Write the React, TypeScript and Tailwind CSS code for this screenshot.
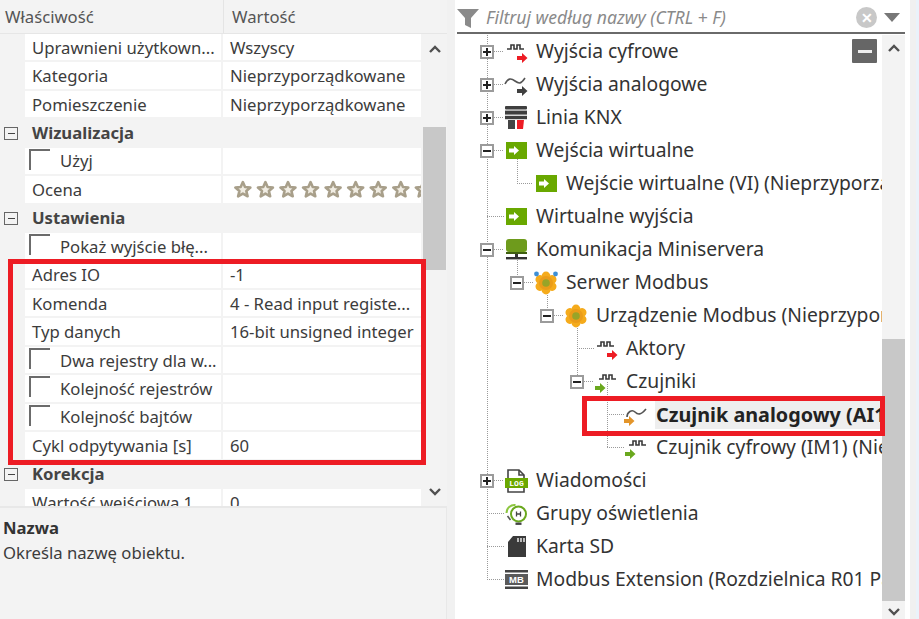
import React from "react";

const F = "font-['Noto_Sans','Open_Sans',sans-serif]";

function Check() {
  return <span className="block w-[21px] h-[21px] border-t-2 border-l-2 border-[#6b6b6b] ml-[4px] mt-[-3px] shrink-0" />;
}

function Stars() {
  return (
    <svg width="193" height="22" viewBox="0 0 193 22" className="block">
      {[0, 1, 2, 3, 4, 5, 6, 7, 8].map((i) => (
        <path
          key={i}
          transform={`translate(${4 + i * 22.8} 1)`}
          d="M9 3l2.2 5 5.4.5-4.1 3.6 1.3 5.3L9 14.6l-4.8 2.8 1.3-5.3L1.4 8.5 6.8 8z"
          fill="#f1ede3"
          stroke="#a89f8a"
          strokeWidth="2.6"
          strokeLinejoin="round"
        />
      ))}
    </svg>
  );
}

type PRow = { n?: string; v?: React.ReactNode; c?: boolean; s?: boolean };
const props: PRow[] = [
  { n: "Uprawnieni użytkown...", v: "Wszyscy" },
  { n: "Kategoria", v: "Nieprzyporządkowane" },
  { n: "Pomieszczenie", v: "Nieprzyporządkowane" },
  { n: "Wizualizacja", s: true },
  { n: "Użyj", c: true },
  { n: "Ocena", v: <Stars /> },
  { n: "Ustawienia", s: true },
  { n: "Pokaż wyjście błę...", c: true },
  { n: "Adres IO", v: "-1" },
  { n: "Komenda", v: "4 - Read input registe..." },
  { n: "Typ danych", v: "16-bit unsigned integer" },
  { n: "Dwa rejestry dla w...", c: true },
  { n: "Kolejność rejestrów", c: true },
  { n: "Kolejność bajtów", c: true },
  { n: "Cykl odpytywania [s]", v: "60" },
  { n: "Korekcja", s: true },
  { n: "Wartość wejściowa 1", v: "0" },
];

function PropertyRow({ r }: { r: PRow }) {
  if (r.s) {
    return (
      <div className="h-[28.45px] shrink-0 flex items-center">
        <span className="w-[14px] h-[13px] ml-[4px] border border-[#666] flex items-center justify-center shrink-0">
          <span className="block w-[7px] h-px bg-[#444]" />
        </span>
        <span className="ml-[14px] mt-[-2px] font-bold text-[#444]">{r.n}</span>
      </div>
    );
  }
  return (
    <div className="h-[28.45px] shrink-0 flex pl-[25px] gap-[2px] pb-[2px]">
      <div className="w-[196px] bg-white flex items-center whitespace-nowrap overflow-hidden">
        {r.c ? (
          <>
            <Check />
            <span className="ml-[10px]">{r.n}</span>
          </>
        ) : (
          <span className="ml-[7px]">{r.n}</span>
        )}
      </div>
      <div className="w-[198px] bg-white flex items-center whitespace-nowrap overflow-hidden pl-[7px]">{r.v}</div>
    </div>
  );
}

function ScrollTrack({ thumbTop, thumbH }: { thumbTop: string; thumbH: string }) {
  return (
    <div className="relative w-[23px] shrink-0 bg-[#f3f3f3]">
      <div className={`absolute left-0 right-0 bg-[#c8c8c8] ${thumbTop} ${thumbH}`} />
    </div>
  );
}

function Chevron({ up, className }: { up?: boolean; className: string }) {
  return (
    <svg width="12" height="8" viewBox="0 0 12 8" className={`absolute ${className}`}>
      <path d={up ? "M1 7l5-5 5 5" : "M1 1l5 5 5-5"} fill="none" stroke="#505050" strokeWidth="2.4" />
    </svg>
  );
}

const Wave = ({ x = 0 }: { x?: number }) => (
  <path transform={`translate(${x} 0)`} d="M1 9h4V5h3v4h3V5h3v4h4" fill="none" stroke="#3a3a3a" strokeWidth="1.6" />
);
const Arrow = ({ x, y, c }: { x: number; y: number; c: string }) => (
  <path transform={`translate(${x} ${y})`} d="M0 3h5V0l5.5 5L5 10V7H0z" fill={c} />
);
const Svg = ({ children }: { children: React.ReactNode }) => (
  <svg width="24" height="24" viewBox="0 0 24 24" className="block">
    {children}
  </svg>
);

const Gear = ({ blue }: { blue?: boolean }) => (
  <Svg>
    {[0, 60, 120, 180, 240, 300].map((a) => (
      <circle key={a} cx="12" cy="5" r="4.4" fill="#f5ab1c" transform={`rotate(${a} 12 12)`} />
    ))}
    <circle cx="12" cy="12" r="7" fill="#ea9c1a" />
    <circle cx="12" cy="12" r="3.8" fill="#98a428" />
    {blue && (
      <>
        <circle cx="2.5" cy="3" r="2.4" fill="#3d8fd6" />
        <circle cx="21.5" cy="3" r="2.4" fill="#3d8fd6" />
      </>
    )}
  </Svg>
);

const GreenBox = () => (
  <Svg>
    <rect x="2" y="3" width="21" height="17" fill="#69a800" />
    <path d="M5 9.5h5V7l5 4.5-5 4.5v-2.5H5z" fill="#fff" />
  </Svg>
);

const icons: Record<string, React.ReactNode> = {
  digRed: (
    <Svg>
      <Wave x={2} />
      <Arrow x={13} y={13} c="#ed1c24" />
    </Svg>
  ),
  anaDark: (
    <Svg>
      <path d="M1 11c3-6 6-6 10-3s6 3 10-3" fill="none" stroke="#555" strokeWidth="1.6" />
      <Arrow x={13} y={13} c="#404040" />
    </Svg>
  ),
  knx: (
    <Svg>
      <rect x="1" y="0" width="22" height="3.4" rx="1" fill="#3f3f3f" />
      <rect x="1" y="4.6" width="22" height="4" fill="#3f3f3f" />
      <rect x="1" y="9.8" width="22" height="3.4" fill="#3f3f3f" />
      <rect x="4" y="14" width="7" height="9" fill="#444" />
      <path d="M13 14h7l-1 9h-6z" fill="#ed1c24" />
    </Svg>
  ),
  green: <GreenBox />,
  net: (
    <Svg>
      <rect x="2" y="1" width="21" height="13" rx="3" fill="#6e9b1c" />
      <rect x="2" y="14" width="21" height="2" fill="#3f5f10" />
      <rect x="11" y="16" width="3" height="4" fill="#333" />
      <rect x="2" y="19" width="21" height="2.4" fill="#333" />
    </Svg>
  ),
  gearBlue: <Gear blue />,
  gear: <Gear />,
  digGreenRed: (
    <Svg>
      <Wave x={2} />
      <Arrow x={13} y={13} c="#ed1c24" />
    </Svg>
  ),
  digGreen: (
    <Svg>
      <Wave x={4} />
      <Arrow x={1} y={13} c="#6aa81e" />
    </Svg>
  ),
  anaOrange: (
    <Svg>
      <path d="M3 14c0-5 5-8 8-5s6 3 11-3" fill="none" stroke="#555" strokeWidth="1.6" />
      <Arrow x={0} y={13} c="#e3952a" />
    </Svg>
  ),
  log: (
    <Svg>
      <path d="M4 1h11l5 5v17H4z" fill="#fff" stroke="#444" strokeWidth="1.6" />
      <path d="M15 1v5h5" fill="none" stroke="#444" strokeWidth="1.6" />
      <rect x="1" y="9" width="23" height="10" fill="#6aa800" />
      <text x="12.5" y="17" textAnchor="middle" fontSize="8" fontWeight="700" fill="#fff" fontFamily="Liberation Mono, monospace">LOG</text>
    </Svg>
  ),
  bulb: (
    <Svg>
      <circle cx="14.5" cy="12" r="7.5" fill="none" stroke="#6aa81e" strokeWidth="2" />
      <path d="M2.5 11a8 8 0 0 1 9-8" fill="none" stroke="#8cc63f" strokeWidth="2" />
      <path d="M3.5 14l3 4" stroke="#555" strokeWidth="1.6" />
      <rect x="11.5" y="20.5" width="6" height="2.4" fill="#444" />
      <path d="M12.5 9.5v5M16.5 9.5v5M12.5 12h4" stroke="#444" strokeWidth="1.3" />
    </Svg>
  ),
  sd: (
    <Svg>
      <path d="M9 1h13v21H4V7z" fill="#3a3a3a" />
      <path d="M14 3v4M17 3v4M20 3v4" stroke="#fff" strokeWidth="1.3" />
    </Svg>
  ),
  mb: (
    <Svg>
      <rect x="1" y="2" width="23" height="2.5" fill="#444" />
      <rect x="1" y="6" width="23" height="11" fill="#5a5a5a" />
      <rect x="1" y="18.5" width="23" height="2.5" fill="#444" />
      <text x="12.5" y="15" textAnchor="middle" fontSize="9.5" fontWeight="700" fill="#fff" fontFamily="Liberation Sans, sans-serif">MB</text>
    </Svg>
  ),
};

function Expander({ open }: { open?: boolean }) {
  return (
    <span className="relative block w-[14px] h-[14px] border-2 border-[#9b9b9b] bg-white">
      <span className="absolute left-[1px] top-[4px] w-[8px] h-[2px] bg-[#222]" />
      {!open && <span className="absolute left-[4px] top-[1px] w-[2px] h-[8px] bg-[#222]" />}
    </span>
  );
}

type TRow = { t: string; i: string; pl: string; ex?: "open" | "closed"; bold?: boolean };
const tree: TRow[] = [
  { t: "Wyjścia cyfrowe", i: "digRed", pl: "pl-[20px]", ex: "closed" },
  { t: "Wyjścia analogowe", i: "anaDark", pl: "pl-[20px]", ex: "closed" },
  { t: "Linia KNX", i: "knx", pl: "pl-[20px]", ex: "closed" },
  { t: "Wejścia wirtualne", i: "green", pl: "pl-[20px]", ex: "open" },
  { t: "Wejście wirtualne (VI) (Nieprzyporządkowane)", i: "green", pl: "pl-[50px]" },
  { t: "Wirtualne wyjścia", i: "green", pl: "pl-[20px]" },
  { t: "Komunikacja Miniservera", i: "net", pl: "pl-[20px]", ex: "open" },
  { t: "Serwer Modbus", i: "gearBlue", pl: "pl-[50px]", ex: "open" },
  { t: "Urządzenie Modbus (Nieprzyporządkowane)", i: "gear", pl: "pl-[80px]", ex: "open" },
  { t: "Aktory", i: "digGreenRed", pl: "pl-[110px]" },
  { t: "Czujniki", i: "digGreen", pl: "pl-[110px]", ex: "open" },
  { t: "Czujnik analogowy (AI1) (Nieprzyporządkowane)", i: "anaOrange", pl: "pl-[140px]", bold: true },
  { t: "Czujnik cyfrowy (IM1) (Nieprzyporządkowane)", i: "digGreen", pl: "pl-[140px]" },
  { t: "Wiadomości", i: "log", pl: "pl-[20px]", ex: "closed" },
  { t: "Grupy oświetlenia", i: "bulb", pl: "pl-[20px]" },
  { t: "Karta SD", i: "sd", pl: "pl-[20px]" },
  { t: "Modbus Extension (Rozdzielnica R01 Parter)", i: "mb", pl: "pl-[20px]" },
];

function TreeLines() {
  const cy = (i: number) => 16.5 + i * 33;
  const lines: [number, number, number, number][] = [
    [27, 0, 27, cy(16)],
    [57, cy(3), 57, cy(4)],
    [57, cy(6), 57, cy(7)],
    [87, cy(7), 87, cy(8)],
    [117, cy(8), 117, cy(10)],
    [147, cy(10), 147, cy(12)],
  ];
  const hs: [number, number, number][] = [
    [34, 44, cy(0)],
    [34, 44, cy(1)],
    [34, 44, cy(2)],
    [34, 44, cy(3)],
    [57, 73, cy(4)],
    [27, 44, cy(5)],
    [34, 44, cy(6)],
    [64, 74, cy(7)],
    [94, 104, cy(8)],
    [117, 134, cy(9)],
    [124, 134, cy(10)],
    [147, 164, cy(11)],
    [147, 164, cy(12)],
    [34, 44, cy(13)],
    [27, 44, cy(14)],
    [27, 44, cy(15)],
    [27, 44, cy(16)],
  ];
  return (
    <svg className="absolute left-0 top-0" width="422" height="561">
      <g stroke="#9a9a9a" strokeWidth="1" strokeDasharray="1 1" fill="none" shapeRendering="crispEdges">
        {lines.map((l, i) => (
          <line key={i} x1={l[0] + 0.5} y1={l[1]} x2={l[2] + 0.5} y2={l[3]} />
        ))}
        {hs.map((h, i) => (
          <line key={i} x1={h[0]} y1={Math.floor(h[2]) + 0.5} x2={h[1]} y2={Math.floor(h[2]) + 0.5} />
        ))}
      </g>
    </svg>
  );
}

export default function App() {
  return (
    <div className={`relative w-[919px] h-[619px] overflow-hidden flex bg-[#f1f1f1] ${F} text-[16.7px] text-[#3c3c3c]`}>
      {/* left panel */}
      <div className="w-[447px] shrink-0 flex flex-col bg-[#f3f3f3]">
        <div className="h-[34px] shrink-0 flex items-center text-[#555] border-b border-[#e6e6e6]">
          <span className="w-[224px] pl-[5px] border-r border-[#e4e4e4] h-full flex items-center">Właściwość</span>
          <span className="pl-[8px]">Wartość</span>
        </div>
        <div className="relative h-[472px] shrink-0 flex overflow-hidden">
          <div className="w-[423px] shrink-0 flex flex-col overflow-hidden">
            {props.map((r) => (
              <PropertyRow key={r.n} r={r} />
            ))}
          </div>
          <ScrollTrack thumbTop="top-[93px]" thumbH="h-[143px]" />
          <Chevron up className="left-[429px] top-[11px]" />
          <Chevron className="left-[429px] top-[454px]" />
        </div>
        <div className="flex-1 border-t-2 border-[#e8e8e8] pl-[3px] pt-[7px] leading-[25px] border-r">
          <div className="font-bold text-[#333]">Nazwa</div>
          <div>Określa nazwę obiektu.</div>
        </div>
      </div>

      {/* right panel */}
      <div className="w-[464px] ml-[8px] shrink-0 flex bg-white pl-[5px]">
        <div className="w-[445px] shrink-0 flex flex-col">
          <div className="h-[31px] mt-[3px] -ml-[3px] shrink-0 flex items-center border-b-2 border-[#6a6a6a] pr-[5px]">
            <svg width="22" height="22" viewBox="0 0 22 22">
              <path d="M0 2h22l-8 9v10l-6-3v-7z" fill="#8a8a8a" />
            </svg>
            <span className="ml-[7px] italic text-[17.6px] text-[#8a8a8a] flex-1">Filtruj według nazwy (CTRL + F)</span>
            <span className="w-[21px] h-[21px] rounded-full bg-[#c8c8c8] text-white flex items-center justify-center text-[14px] font-bold leading-none">✕</span>
            <svg width="16" height="9" viewBox="0 0 16 9" className="ml-[7px]">
              <path d="M0 0h16L8 9z" fill="#777" />
            </svg>
          </div>
          <div className="relative flex flex-1 mt-px overflow-hidden">
            <div className="relative w-[422px] shrink-0 overflow-hidden text-[#333] text-[19.3px]">
              <TreeLines />
              {tree.map((r) => (
                <div key={r.t} className={`relative h-[33px] flex items-center whitespace-nowrap ${r.pl}`}>
                  <span className="w-[14px] mr-[10px] shrink-0 flex">
                    {r.ex && <Expander open={r.ex === "open"} />}
                  </span>
                  <span className="w-[24px] mr-[8px] shrink-0">{icons[r.i]}</span>
                  {r.bold ? (
                    <span className="font-bold text-[19.8px] bg-[#eeeeee] -ml-[1px] pl-[1px] text-[#222] flex-1">{r.t}</span>
                  ) : (
                    <span>{r.t}</span>
                  )}
                </div>
              ))}
              <div className="absolute left-[392px] top-[4px] w-[25px] h-[24px] rounded-[1px] bg-[#666] flex items-center justify-center">
                <span className="block w-[14px] h-[3px] bg-[#eee]" />
              </div>
            </div>
            <ScrollTrack thumbTop="top-[304px]" thumbH="h-[262px]" />
            <Chevron up className="left-[428px] top-[9px]" />
            <Chevron className="left-[428px] top-[573px]" />
          </div>
        </div>
        <div className="w-[5px] shrink-0" />
        <div className="w-[6px] shrink-0 bg-[#f0f0f0]" />
        <div className="flex-1 bg-[#eaf2fa]" />
      </div>

      {/* annotations */}
      <div className="absolute left-[8px] top-[259px] w-[418px] h-[206px] border-[5px] border-[#ed1c24]" />
      <div className="absolute left-[582px] top-[396px] w-[303px] h-[40px] border-[5px] border-[#ed1c24]" />
    </div>
  );
}
